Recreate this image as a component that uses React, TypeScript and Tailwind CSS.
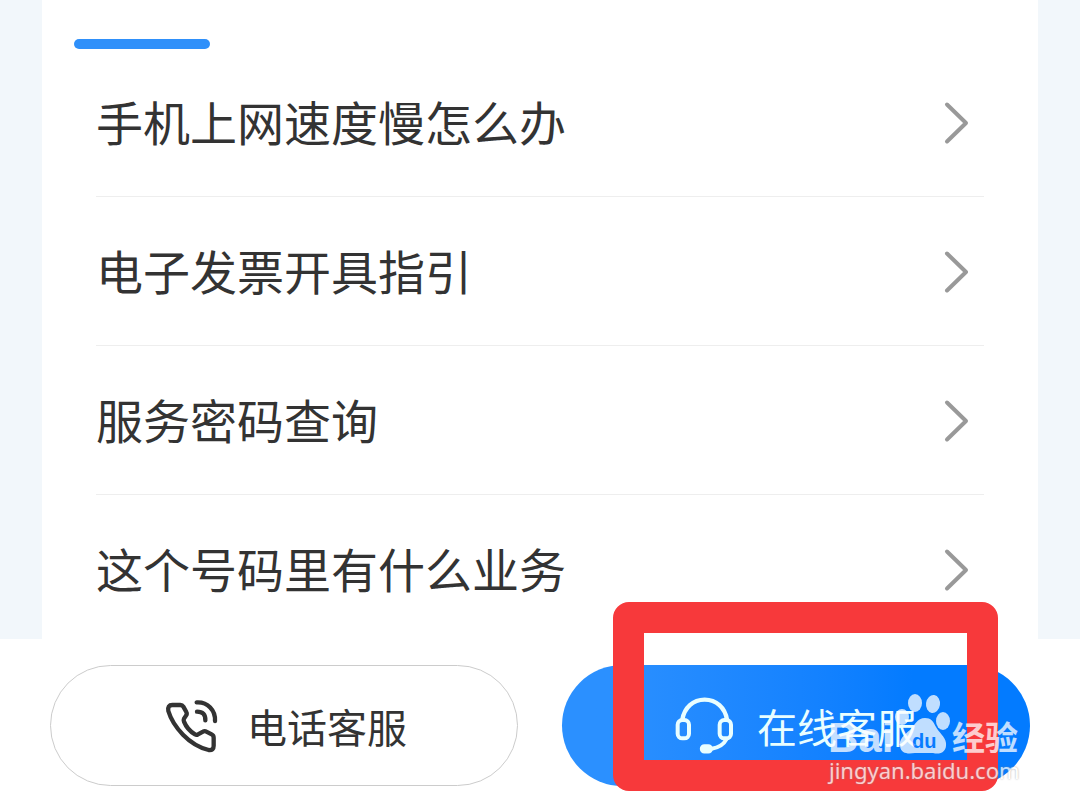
import React from "react";

const questions = [
  { id: 1, title: "手机上网速度慢怎么办" },
  { id: 2, title: "电子发票开具指引" },
  { id: 3, title: "服务密码查询" },
  { id: 4, title: "这个号码里有什么业务" },
];

const ChevronIcon = () => (
  <svg
    className="mr-3 h-[44px] w-[28px] shrink-0"
    viewBox="0 0 28 44"
    fill="none"
    stroke="#999999"
    strokeWidth="4"
    strokeLinecap="round"
    strokeLinejoin="round"
    aria-hidden="true"
  >
    <path d="M3 3.5 L22 22 L3 40.5" />
  </svg>
);

const PhoneIcon = () => (
  <svg
    className="size-[54px] shrink-0"
    viewBox="48 42 162 162"
    fill="none"
    stroke="#333333"
    strokeWidth="13"
    strokeLinecap="round"
    strokeLinejoin="round"
    aria-hidden="true"
  >
    <path d="M70 60 H94 Q100 60 103 65 L112 81 Q115 86 111 92 L105 101 Q103 105 105 110 Q115 135 138 148 Q142 151 147 148 L162 140 Q167 137 172 140 L188 148 Q194 151 194 158 V182 Q194 197 179 195 Q136 184 102 149 Q69 115 58 78 Q55 60 70 60 Z" />
    <path d="M143 52 C176 50 200 76 198 108" />
    <path d="M144 80 Q170 80 169 106" />
  </svg>
);

const HeadsetIcon = () => (
  <svg
    className="size-[58px] shrink-0"
    viewBox="48 36 174 174"
    fill="none"
    stroke="#e9feff"
    strokeWidth="12"
    strokeLinecap="round"
    aria-hidden="true"
  >
    <path d="M70 104 C76 68 102 44 137 44 C172 44 198 68 204 104" strokeWidth="13" />
    <rect x="56" y="105" width="34" height="55" rx="14" />
    <rect x="182" y="105" width="34" height="55" rx="14" />
    <path d="M202 163 Q190 186 158 191" />
    <rect x="125" y="180" width="34" height="23" rx="11" fill="#e9feff" strokeWidth="5" />
  </svg>
);

const Watermark = () => (
  <div className="pointer-events-none absolute top-[25px] right-2 w-[193px] text-white opacity-75">
    <svg
      className="h-[66px] w-full overflow-visible"
      viewBox="0 0 193 66"
      fill="currentColor"
      role="img"
      aria-label="Baidu 经验"
    >
      <text x="-1" y="62" fontSize="42" fontWeight="700" fontFamily="Liberation Sans, sans-serif">
        Bai
      </text>
      <ellipse cx="73" cy="27" rx="7" ry="8" />
      <ellipse cx="86" cy="13" rx="7" ry="9" />
      <ellipse cx="104" cy="14" rx="7" ry="9" transform="rotate(8 104 14)" />
      <ellipse cx="114" cy="31" rx="7" ry="9" />
      <path d="M96 28 C88 28 86 35 81 40 C75 45 70 49 71 56 C72 64 79 64 86 63 H104 C111 65 118 62 117 53 C116 46 110 43 107 37 C104 31 102 28 96 28 Z" />
      <text x="83" y="58" fontSize="20" fontWeight="700" fill="#0a7cff" fontFamily="Liberation Sans, sans-serif">
        du
      </text>
      <text x="123" y="60" fontSize="33" fontWeight="700" fontFamily="Noto Sans CJK SC, sans-serif">
        经验
      </text>
    </svg>
    <p className="font-['Noto_Sans',sans-serif] text-[22px] leading-7 text-shadow-[0_0_2px_#888888]">
      jingyan.baidu.com
    </p>
  </div>
);

const App = () => {
  return (
    <main className="bg-white font-['Noto_Sans_CJK_SC',sans-serif] text-[#333333]">
      <div className="bg-[#f2f7fb] px-[42px]">
        <section className="flow-root bg-white">
          {/* Active tab marker */}
          <div className="h-12 px-8 pt-[39px]">
            <div className="h-[10px] w-[136px] rounded-full bg-[#2f90fa]" />
          </div>

          {/* Common questions */}
          <ul className="px-[54px]">
            {questions.map((question) => (
              <li key={question.id} className="border-b border-[#eeeeee] last:-mb-1 last:border-b-0">
                <a
                  href="#"
                  className="flex items-center justify-between pt-10 pb-[38px] text-[47px] leading-[66px]"
                >
                  <span className="pb-1">{question.title}</span>
                  <ChevronIcon />
                </a>
              </li>
            ))}
          </ul>
        </section>
      </div>

      {/* Contact buttons */}
      <div className="grid grid-cols-2 gap-11 px-[50px] pt-[26px] pb-[22px]">
        <button
          type="button"
          className="flex h-[121px] items-center justify-center gap-7 rounded-full border border-[#cccccc] pl-1 text-[40px]"
        >
          <PhoneIcon />
          电话客服
        </button>

        <div className="relative">
          <button
            type="button"
            className="flex h-[121px] w-full items-center justify-center gap-6 rounded-full bg-linear-to-r from-[#2b90ff] from-10% to-[#037bff] to-75% text-[40px] text-[#e9feff]"
          >
            <HeadsetIcon />
            在线客服
          </button>
          {/* Highlight frame */}
          <div className="pointer-events-none absolute -top-[63px] right-8 -bottom-[5px] left-[51px] rounded-2xl border-[31px] border-[#f7393b]" />
          <Watermark />
        </div>
      </div>
    </main>
  );
};

export default App;
